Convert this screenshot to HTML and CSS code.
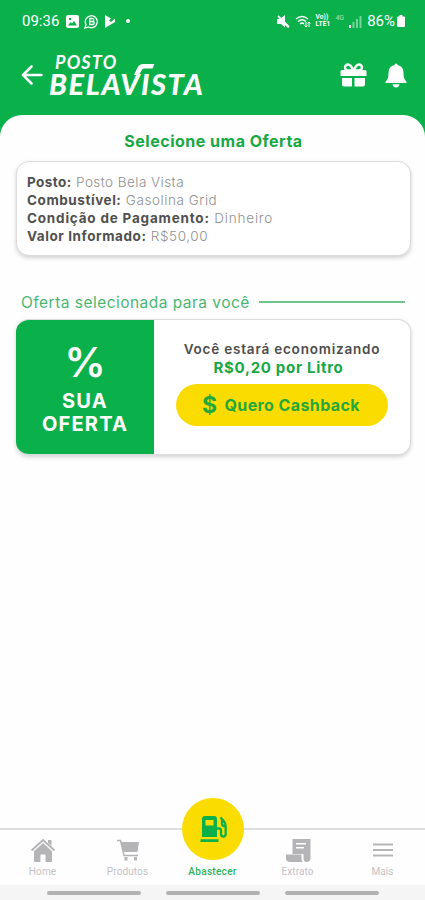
FILE: index.html
```html
<!DOCTYPE html>
<html lang="pt-BR">
  <head>
    <meta charset="UTF-8" />
    <meta name="viewport" content="width=device-width, initial-scale=1.0" />
    <title>Posto Bela Vista</title>
    <link rel="stylesheet" href="styles.css">
  </head>
  <body>
    <div class="status-bar">
      <span class="clock">09:36</span>
      <div class="status-left">
        <svg width="13" height="13" viewBox="0 0 13 13">
          <path fill="#fff" fill-rule="evenodd" d="M2 0h9q2 0 2 2v9q0 2-2 2H2q-2 0-2-2V2q0-2 2-2zM2 10.500h9L8 6 6 8.500 4.500 7zM3 3v2h2V3z" />
        </svg>
        <svg width="15" height="15" viewBox="0 0 15 15" fill="none" stroke="#fff">
          <path stroke-width="1.300" d="M1 14l1-3.500a6 6 0 1 1 2.500 2.500z" />
          <path stroke-width="1.300" d="M5.700 4.500h2.500a1.400 1.400 0 0 1 0 3H5.700zM5.700 7.500h3a1.400 1.400 0 0 1 0 3h-3z" />
        </svg>
        <svg width="12" height="13" viewBox="0 0 12 13">
          <path fill="#fff" d="M1 0l6 3.500-2 2 2 1.500 4-3.500v3.500L1 13z" />
        </svg>
        <span class="dot"></span>
      </div>
      <div class="status-right">
        <svg width="13" height="13" viewBox="0 0 13 13">
          <path fill="#fff" d="M0 4h3l5-4v8l4 4-1 1L8 10v2.500L4 9H0z" />
          <path stroke="#fff" stroke-width="1.800" d="M1 1l11 11" />
        </svg>
        <svg width="16" height="13" viewBox="0 0 16 13" fill="none" stroke="#fff" stroke-width="1.400">
          <path d="M1 4q6-5 12 0M3 6.500q4-3.500 8 0M5 9q2-2 4 0" />
          <path d="M11 7v5M9.500 10.500L11 12l1.500-1.500M14 12V7M12.500 8.500L14 7l1.500 1.500" stroke-width="1" />
        </svg>
        <div class="volte">
          <span>Vo))</span>
          <span>LTE1</span>
        </div>
        <span class="net">4G</span>
        <svg width="13" height="13" viewBox="0 0 13 13" fill="#fff">
          <path d="M0 10h2v3H0z" />
          <path opacity=".45" d="M3.500 7h2v6h-2zM7 4h2v9H7zM10.500 1h2v12h-2z" />
        </svg>
        <span class="battery-text">86%</span>
        <svg width="8" height="12" viewBox="0 0 8 12">
          <path fill="#fff" d="M2.500 0h3v1.500H7q1 0 1 1V11q0 1-1 1H1q-1 0-1-1V2.500q0-1 1-1h1.500z" />
        </svg>
      </div>
    </div>

    <header class="header">
      <svg class="back" width="22" height="20" viewBox="0 0 22 20" fill="none" stroke="#fff" stroke-width="2.500" stroke-linecap="round" stroke-linejoin="round">
        <path d="M20.500 10H2M10.500 1.500L2 10l8.500 8.500" />
      </svg>
      <div class="logo">
        <span class="logo-top">POSTO</span>
        <span class="logo-name">BELAVISTA</span>
        <svg class="logo-swoosh" width="21" height="11" viewBox="0 0 21 11">
          <path fill="#fff" d="M0 11L3.500 3.500Q5.500 0 9 0h11.500L18.500 4.500H10Q8.500 4.500 7.500 6.500L5 11z" />
        </svg>
      </div>
      <div class="actions">
        <svg width="27" height="24" viewBox="0 0 27 24">
          <path fill="#fff" d="M2 7h23q1.500 0 1.500 1.500V13H.5V8.500Q.5 7 2 7zM2 15h10v8.500H4q-2 0-2-2zM14.500 15H25v6.500q0 2-2 2h-8.500z" />
          <path fill="none" stroke="#fff" stroke-width="2.400" d="M13.500 8Q11 1.500 8 1.500a3 3 0 0 0 0 6h11a3 3 0 0 0 0-6Q16 1.500 13.500 8z" />
        </svg>
        <svg width="22" height="25" viewBox="0 0 22 25">
          <path fill="#fff" d="M9.500 2q0-1.500 1.500-1.500T12.500 2Q18.500 3 18.500 10q0 6 2.500 8 .7 1 .5 2H.5q-.2-1 .5-2 2.500-2 2.500-8 0-7 6-8zM7.500 21.200h7Q14 24.500 11 24.500t-3.500-3.300z" />
        </svg>
      </div>
    </header>

    <main class="sheet">
      <h1 class="title">Selecione uma Oferta</h1>

      <div class="card info">
        <p class="station"><b>Posto:</b> <span>Posto Bela Vista</span></p>
        <p class="fuel"><b>Combustível:</b> <span>Gasolina Grid</span></p>
        <p class="payment"><b>Condição de Pagamento:</b> <span>Dinheiro</span></p>
        <p class="amount"><b>Valor Informado:</b> <span>R$50,00</span></p>
      </div>

      <div class="section">
        <h2>Oferta selecionada para você</h2>
        <span class="line"></span>
      </div>

      <div class="card offer">
        <div class="offer-tag">
          <span class="percent">%</span>
          <span>SUA</span>
          <span>OFERTA</span>
        </div>
        <div class="offer-body">
          <p class="saving">Você estará economizando</p>
          <p class="value">R$0,20 por Litro</p>
          <button class="cashback">
            <span class="dollar">$</span>
            <span>Quero Cashback</span>
          </button>
        </div>
      </div>
    </main>

    <nav class="tabs">
      <a class="tab">
        <svg width="26" height="24" viewBox="0 0 26 24">
          <path fill="none" stroke="#b5b5b7" stroke-width="2" d="M1.500 12.500L13 2l11.500 10.500" />
          <path fill="#b5b5b7" d="M18 2h3.500v6L18 5zM13 5l9 8.300V24h-6.500v-7.500h-5V24H4V13.300z" />
        </svg>
        <span>Home</span>
      </a>
      <a class="tab">
        <svg width="24" height="24" viewBox="0 0 24 24">
          <path fill="#b5b5b7" d="M5 4h18l-1.500 10H7.500zM8.500 19h3v3.500h-3zM18 19h3v3.500h-3z" />
          <path fill="none" stroke="#b5b5b7" stroke-width="1.500" d="M1 2.500h3.500L8 17.500h14" />
        </svg>
        <span>Produtos</span>
      </a>
      <a class="tab active">
        <div class="fab">
          <svg width="28" height="28" viewBox="0 0 28 28">
            <path fill="#0ab14b" fill-rule="evenodd" d="M5 1h9q3 0 3 3v18H2V4q0-3 3-3zM5.500 5v5.500h8V5zM.5 24.200h18v2.800H.5z" />
            <path fill="none" stroke="#0ab14b" stroke-width="2.300" d="M17 13.500h2q2 0 2 2V19q0 2.500 2.300 2.500t2.400-2.500v-7q0-4-2-6L20.500 2.500M22 5v4q0 2 3.500 2.500" />
          </svg>
        </div>
        <span>Abastecer</span>
      </a>
      <a class="tab">
        <svg width="26" height="24" viewBox="0 0 26 24">
          <path fill="#b5b5b7" fill-rule="evenodd" d="M7.500 1H25.500v19q0 4-4 4-3 0-3-4v-4h-11zM11 5v1.500h10V5zM11 9v1.500h8V9zM1 16.500h15.500V20q0 2 1 4H5q-4 0-4-4z" />
        </svg>
        <span>Extrato</span>
      </a>
      <a class="tab">
        <svg width="20" height="24" viewBox="0 0 20 24">
          <path stroke="#b5b5b7" stroke-width="1.800" d="M0 6.500h20M0 12h20M0 17.500h20" />
        </svg>
        <span>Mais</span>
      </a>
    </nav>

    <div class="gesture-bar">
      <span></span>
      <span></span>
      <span></span>
    </div>
  </body>
</html>
```
FILE: styles.css
```css
* {
  box-sizing: border-box;
}
body {
  margin: 0;
  height: 900px;
  display: flex;
  flex-direction: column;
  overflow: hidden;
  background-color: #0ab14b;
  font-family: Inter, "Open Sans", sans-serif;
  white-space: nowrap;
}
p,
h1,
h2 {
  margin: 0;
}
svg {
  display: block;
  flex: none;
}

/* Status bar */
.status-bar {
  display: flex;
  align-items: center;
  height: 42px;
  padding: 0 20px 0 22px;
  color: #fff;
  font-family: Roboto, sans-serif;
  font-size: 15px;
}
.clock {
  width: 44px;
}
.status-left {
  display: flex;
  align-items: center;
  gap: 5px;
}
.dot {
  width: 4px;
  height: 4px;
  margin-left: 5px;
  border-radius: 50%;
  background-color: #fff;
}
.status-right {
  display: flex;
  align-items: center;
  margin-left: auto;
}
.volte {
  display: flex;
  flex-direction: column;
  margin: 0 5px 0 4px;
  font-size: 6.5px;
  font-weight: 700;
  line-height: 7px;
  letter-spacing: 0.2px;
}
.net {
  margin: -6px 5px 0 0;
  font-size: 7px;
  opacity: 0.6;
}
.status-right svg + svg {
  margin-left: 5px;
}
.battery-text {
  margin: 0 2px 0 5px;
}

/* Header */
.header {
  display: flex;
  align-items: center;
  height: 73px;
  padding: 0 18px 7px 21px;
}
.logo {
  position: relative;
  display: flex;
  flex-direction: column;
  margin-left: 6px;
  color: #fff;
  font-family: Lato, sans-serif;
  font-style: italic;
  font-weight: 900;
}
.logo-top {
  padding-left: 6px;
  font-size: 18px;
  font-weight: 700;
  line-height: 16px;
  letter-spacing: 1.2px;
}
.logo-name {
  padding-top: 2px;
  font-size: 29px;
  line-height: 24px;
  letter-spacing: 1.6px;
}
.logo-swoosh {
  position: absolute;
  left: 85px;
  top: 10px;
}
.actions {
  display: flex;
  align-items: center;
  gap: 18px;
  margin-left: auto;
}

/* Content */
.sheet {
  flex: 1;
  padding: 0 14px 0 16px;
  border-radius: 22px 22px 0 0;
  background-color: #fefefe;
}
.title {
  height: 46px;
  padding-top: 16px;
  font-size: 16px;
  font-weight: 700;
  line-height: 20px;
  letter-spacing: 0.5px;
  text-align: center;
  color: #16a844;
}
.card {
  border: 1px solid #dcdcdc;
  border-radius: 13px;
  background-color: #fff;
  box-shadow: 0 2px 4px rgba(0, 0, 0, 0.18);
}
.info {
  height: 95px;
  padding: 11px 10px;
  font-size: 13.5px;
  line-height: 18px;
  color: #8f8f8f;
}
.info b {
  font-weight: 700;
  color: #505050;
}
.info span {
  font-weight: 300;
}
.station {
  letter-spacing: 0.45px;
}
.fuel {
  letter-spacing: 0.56px;
}
.payment {
  letter-spacing: 0.8px;
}
.amount {
  letter-spacing: 0.57px;
}
.section {
  display: flex;
  align-items: center;
  gap: 9px;
  height: 63px;
  padding: 29px 6px 0 5px;
}
.section h2 {
  font-size: 15.5px;
  font-weight: 400;
  letter-spacing: 0.47px;
  color: #4bb672;
}
.section .line {
  flex: 1;
  height: 1.5px;
  background-color: #72c48f;
}
.offer {
  display: flex;
  height: 136px;
  border-left: 0;
  overflow: hidden;
}
.offer-tag {
  display: flex;
  flex-direction: column;
  align-items: center;
  width: 138px;
  padding-top: 20px;
  background-color: #0ab14b;
  color: #fff;
  font-size: 20px;
  font-weight: 700;
  line-height: 23px;
  letter-spacing: 1.2px;
}
.percent {
  margin-bottom: 6px;
  font-size: 41px;
  font-weight: 600;
  line-height: 44px;
  letter-spacing: 0;
}
.offer-body {
  flex: 1;
  display: flex;
  flex-direction: column;
  align-items: center;
  padding-top: 20px;
}
.saving {
  font-size: 13.5px;
  font-weight: 600;
  line-height: 19px;
  letter-spacing: 0.8px;
  color: #4d4d4d;
}
.value {
  margin-right: 7px;
  font-size: 15px;
  font-weight: 700;
  line-height: 18px;
  letter-spacing: 0.7px;
  color: #16a844;
}
.cashback {
  display: flex;
  align-items: center;
  justify-content: center;
  gap: 7px;
  width: 212px;
  height: 42px;
  margin-top: 7px;
  padding: 0 2px 0 0;
  border: 0;
  border-radius: 21px;
  background-color: #fbdc00;
  color: #24a83d;
  font: 700 16px Inter, sans-serif;
  letter-spacing: 0.4px;
}
.dollar {
  font-size: 23px;
}

/* Bottom tabs */
.tabs {
  display: grid;
  grid-template-columns: repeat(5, 1fr);
  height: 57px;
  border-top: 2px solid #dedede;
  background-color: #fefefe;
}
.tab {
  display: flex;
  flex-direction: column;
  align-items: center;
  padding-top: 8px;
  font-family: Roboto, sans-serif;
  font-size: 10px;
  line-height: 12px;
  letter-spacing: 0.1px;
  color: #c2c2c4;
}
.tab span {
  margin-top: 4px;
}
.active {
  padding-top: 0;
  color: #2fb35c;
  font-weight: 500;
  letter-spacing: 0.3px;
}
.fab {
  display: flex;
  align-items: center;
  justify-content: center;
  width: 62px;
  height: 62px;
  margin-top: -32px;
  padding-left: 3px;
  border-radius: 50%;
  background-color: #fbdc00;
}
.active span {
  margin-top: 6px;
}

.gesture-bar {
  display: flex;
  align-items: center;
  justify-content: center;
  gap: 25px;
  height: 15px;
  background-color: #f5f5f5;
}
.gesture-bar span {
  width: 94px;
  height: 4px;
  border-radius: 2px;
  background-color: #b2b2b2;
}
```
